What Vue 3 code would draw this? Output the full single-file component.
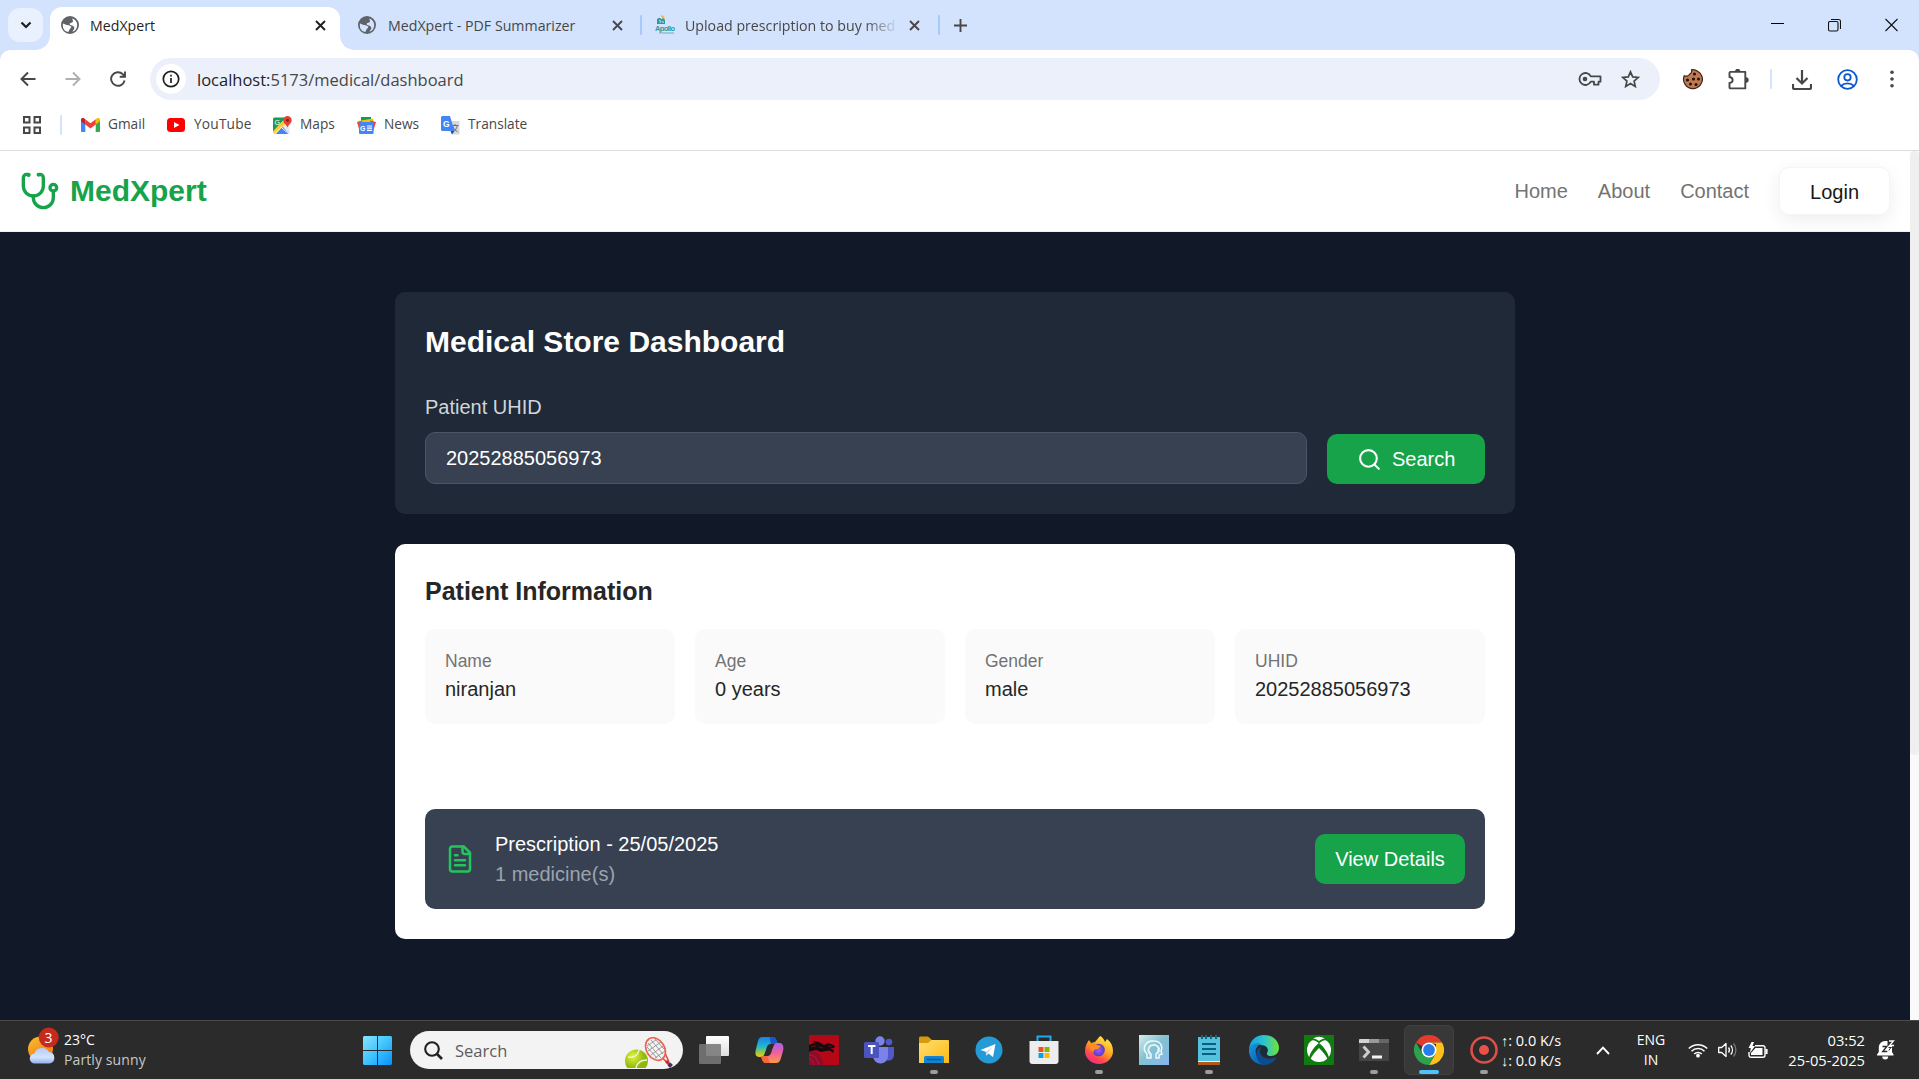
<script setup>
const fields = [
  { label: 'Name', value: 'niranjan' },
  { label: 'Age', value: '0 years' },
  { label: 'Gender', value: 'male' },
  { label: 'UHID', value: '20252885056973' },
]
const globe = 'M9 0a9 9 0 1 0 0 18A9 9 0 0 0 9 0zM1.8 9c0-.6.1-1.100.2-1.600l3.100 1.300c.8.4 1.200.3 1.900.4 1 .2 1.300.8 2.300 1 .9.2 1.200.9.6 1.700l-1.400 1.700-1.200 2.600A7.200 7.200 0 0 1 1.800 9zm9.700 6.700c.3-1.300 1.600-2 1.800-3.400.2-1-.4-1.800-1.300-2.300-1.200-.6-2.900-.4-3.300-1.700-.2-.9.6-1.500 1.600-1.600 1.100-.1 1.900-.8 1.700-1.900-.1-.7-.8-1.100-.7-2.300A7.200 7.200 0 0 1 16.200 9a7.200 7.200 0 0 1-4.700 6.700z'
</script>

<template>
  <div class="screen">
    <div class="tabstrip">
      <button class="tab-search">
        <svg width="12" height="8" viewBox="0 0 12 8"><path d="M1.500 1.500 6 6l4.500-4.500" fill="none" stroke="#1f1f1f" stroke-width="2.200" /></svg>
      </button>
      <div class="tab active">
        <svg class="fav" width="18" height="18"><path :d="globe" fill="#5f6368" /></svg>
        <span class="tab-title">MedXpert</span>
        <svg class="x" width="11" height="11"><path d="M1 1l9 9M10 1l-9 9" stroke="#1f1f1f" stroke-width="1.900" /></svg>
      </div>
      <div class="tab second">
        <svg class="fav" width="18" height="18"><path :d="globe" fill="#5f6368" /></svg>
        <span class="tab-title">MedXpert - PDF Summarizer</span>
        <svg class="x" width="11" height="11"><path d="M1 1l9 9M10 1l-9 9" stroke="#474747" stroke-width="1.900" /></svg>
      </div>
      <i class="tab-sep"></i>
      <div class="tab third">
        <svg class="fav" width="20" height="20" viewBox="0 0 20 20">
          <path d="M5.500 0l3.500 1 1 4-3-2z" fill="#f6b84b" /><path d="M2 4c2-1.500 4-1 4.500.5L8 3l2 2v4H2z" fill="#2e9aa0" /><path d="M4 5.500l2 .8-1 1.500M8 6v2" stroke="#d3e3fd" fill="none" />
          <text x="0" y="15.500" font-size="7.500" font-weight="700" font-family="Liberation Sans, sans-serif" fill="#2e9aa0" textLength="20">Apollo</text>
          <path d="M5 14v5M7 18h12" stroke="#5fb4ad" />
        </svg>
        <span class="tab-title fade">Upload prescription to buy med</span>
        <svg class="x" width="11" height="11"><path d="M1 1l9 9M10 1l-9 9" stroke="#474747" stroke-width="1.900" /></svg>
      </div>
      <i class="tab-sep"></i>
      <svg class="plus" width="13" height="13"><path d="M6.500 0v13M0 6.500h13" stroke="#474747" stroke-width="1.900" /></svg>
      <div class="win">
        <svg width="13" height="14"><path d="M0 5.500h13" stroke="#000" /></svg>
        <svg width="13" height="14"><path d="M.5 5a1.500 1.500 0 0 1 1.500-1.500h6.500A1.500 1.500 0 0 1 10 5v6.500A1.500 1.500 0 0 1 8.500 13H2A1.500 1.500 0 0 1 .5 11.500zM3 1.500h7.500a2 2 0 0 1 2 2V11" fill="none" stroke="#111" stroke-width="1.100" /></svg>
        <svg width="13" height="14"><path d="M.5 1l12 12M12.500 1l-12 12" stroke="#111" stroke-width="1.100" /></svg>
      </div>
    </div>

    <div class="toolbar">
      <svg class="nav-ic" width="16" height="16"><path d="M15.500 8H2M8 1.500 1.500 8 8 14.500" fill="none" stroke="#474747" stroke-width="2" /></svg>
      <svg class="nav-ic" width="16" height="16"><path d="M.5 8H14M8 1.500 14.500 8 8 14.500" fill="none" stroke="#b0b0b0" stroke-width="2" /></svg>
      <svg class="nav-ic" width="16" height="16"><path d="M14.600 9.500A6.800 6.800 0 1 1 12.800 3.200L15 5.300M15 .5v5.300H9.700" fill="none" stroke="#474747" stroke-width="1.900" /></svg>
      <div class="omnibox">
        <span class="info"><svg width="18" height="18"><circle cx="9" cy="9" r="7.700" fill="none" stroke="#1f1f1f" stroke-width="1.700" /><path d="M9 8v5M9 4.800v1.800" stroke="#1f1f1f" stroke-width="1.700" /></svg></span>
        <span class="url"><b>localhost:</b>5173/medical/dashboard</span>
        <svg class="key" width="24" height="14"><path d="M12.800 4.300A6 6 0 1 0 12.800 9.700H16v3h4.500v-3h2V4.300z" fill="none" stroke="#474747" stroke-width="1.800" stroke-linejoin="round" /><circle cx="7" cy="7" r="2.300" fill="#474747" /></svg>
        <svg class="star" width="19" height="18" viewBox="0 0 19 18"><path d="M9.500 1.800l2.200 5.100 5.600.5-4.200 3.700 1.200 5.400-4.800-2.900-4.800 2.900 1.200-5.400L1.700 7.400l5.600-.5z" fill="none" stroke="#474747" stroke-width="1.700" /></svg>
      </div>
      <svg class="cookie" width="21" height="21" viewBox="0 0 21 21"><path d="M9.500.8c.6 1.800-.1 3.700-1.800 4.200-.8 1.700-3.200 2.600-5.500 1.700A9.400 9.400 0 1 0 19.800 7 9.300 9.300 0 0 0 16 2.500 9 9 0 0 0 9.500.8z" fill="#c07a52" stroke="#3e231a" stroke-width="1.200" /><g fill="#21110d"><circle cx="12.500" cy="5" r="1.500" /><circle cx="11.500" cy="10" r="1.600" /><circle cx="5.500" cy="11" r="1.600" /><circle cx="16.500" cy="10" r="1.500" /><circle cx="8.500" cy="15" r="1.500" /><circle cx="14" cy="15.500" r="1.500" /></g></svg>
      <svg class="puzzle" width="21" height="21" viewBox="0 0 21 21"><path d="M3 2.900h14.300v16.500H2.500a1 1 0 0 1-1-1V14c4.200-.5 4.200-5.500 0-6V3.900a1 1 0 0 1 1-1z" fill="none" stroke="#474747" stroke-width="1.900" stroke-linejoin="round" /><path d="M7 2.500a2.700 2.700 0 0 1 5.400 0zM18 8.300a2.700 2.700 0 0 1 0 5.400z" fill="#474747" /></svg>
      <i class="tool-sep"></i>
      <svg class="dl" width="20" height="20"><path d="M10 0v13M4.500 8l5.500 5.500L15.500 8M1 14v3.500A1.500 1.500 0 0 0 2.500 19h15a1.500 1.500 0 0 0 1.500-1.500V14" fill="none" stroke="#474747" stroke-width="2.200" /></svg>
      <svg class="prof" width="21" height="21"><g fill="none" stroke="#0b57d0" stroke-width="1.800"><circle cx="10.500" cy="10.500" r="9.300" /><circle cx="10.500" cy="8.300" r="3.200" /><path d="M4 17c3.500-3.500 9.500-3.500 13 0" /></g></svg>
      <svg class="dots" width="4" height="18"><g fill="#474747"><circle cx="2" cy="2.200" r="1.800" /><circle cx="2" cy="9" r="1.800" /><circle cx="2" cy="15.800" r="1.800" /></g></svg>
    </div>

    <div class="bookmarks">
      <svg class="apps" width="18" height="18"><path d="M1 1h5.500v5.500H1zM11.500 1H17v5.500h-5.500zM1 11.500h5.500V17H1zM11.500 11.500H17V17h-5.500z" fill="none" stroke="#474747" stroke-width="2" /></svg>
      <i class="bm-sep"></i>
      <div class="bm gmail"><svg width="19" height="14" viewBox="0 0 19 14"><path d="M0 2v11a1 1 0 0 0 1 1h3.300V5z" fill="#4285f4" /><path d="M19 2v11a1 1 0 0 1-1 1h-3.300V5z" fill="#34a853" /><path d="M14.700 1.200V6.500L19 3.300V1.700C19 0 17-.6 15.700.4z" fill="#fbbc04" /><path d="M4.300 6.500V1.200l5.200 4 5.200-4v5.300l-5.200 4z" fill="#ea4335" /><path d="M0 1.700v1.600l4.300 3.200V1.200L3.300.4C2-.6 0 0 0 1.700z" fill="#c5221f" /></svg><span>Gmail</span></div>
      <div class="bm yt"><svg width="18" height="14"><rect width="18" height="14" rx="3.500" fill="#f00" /><path d="M7 4l5.500 3L7 10z" fill="#fff" /></svg><span>YouTube</span></div>
      <div class="bm maps"><svg width="19" height="19" viewBox="0 0 19 19"><rect y="1.500" width="16.500" height="16.500" rx="1.500" fill="#e8eaed" /><path d="M0 15.500V3a1.500 1.500 0 0 1 1.500-1.500H13z" fill="#1a9c57" /><path d="M1.500 18L9 10l7.500 8z" fill="#4285f4" /><path d="M0 15.800L11 4l2.500 2.500L3 18H1z" fill="#fbc92f" /><path d="M8 11l8 7M1.500 18L9 10.500" stroke="#fff" stroke-width="1" /><path d="M14.500 11.500C13 8 10.300 7.500 10.300 4.300a4.200 4.200 0 0 1 8.400 0C18.700 7.500 16 8 14.500 11.500z" fill="#e34133" /><circle cx="14.500" cy="4.300" r="1.500" fill="#8e1f17" /><text x="1.500" y="8.500" font-size="7" fill="#fff" font-family="Liberation Sans, sans-serif">G</text></svg><span>Maps</span></div>
      <div class="bm news"><svg width="19" height="17" viewBox="0 0 19 17"><path d="M4 0h10v6H4z" fill="#0c9d58" /><path d="M1 4l15-2.500 1 4H2z" fill="#fbbc04" /><path d="M13 3.500l6 1.500-3 10z" fill="#ea4335" /><path d="M0 5l5-1v8H2z" fill="#ea4335" /><rect x="2" y="5" width="14.500" height="12" rx="1" fill="#4285f4" /><text x="3" y="13.500" font-size="7" font-weight="700" fill="#fff" font-family="Liberation Sans, sans-serif">G</text><path d="M10 9h5M10 11.200h5M10 13.400h5" stroke="#fff" stroke-width="1.200" /></svg><span>News</span></div>
      <div class="bm trans"><svg width="19" height="19" viewBox="0 0 19 19"><path d="M6 5h12.500v13.500H11z" fill="#d5d8dc" /><path d="M10.500 9.500h7M14 8v1.500M16.500 9.500c-1 3.500-2.500 5-4.500 6M12 10.500c1 3 2.500 4 4.500 5" stroke="#6b7076" fill="none" /><path d="M1.500 0H9l4.500 15H1.500A1.500 1.500 0 0 1 0 13.500v-12A1.500 1.500 0 0 1 1.500 0z" fill="#4285f4" /><path d="M9.500 15h4L11 18.500z" fill="#1a4ea6" /><text x="2" y="10.500" font-size="8.500" fill="#fff" font-weight="700" font-family="Liberation Sans, sans-serif">G</text></svg><span>Translate</span></div>
    </div>

    <div class="viewport">
      <div class="page">
        <header>
          <div class="brand">
            <svg width="40" height="40" viewBox="0 0 24 24" fill="none" stroke="#16a34a" stroke-width="2" stroke-linecap="round" stroke-linejoin="round"><path d="M4.800 2.300A.3.300 0 1 0 5 2H4a2 2 0 0 0-2 2v5a6 6 0 0 0 12 0V4a2 2 0 0 0-2-2h-1a.2.200 0 1 0 .3.300" /><path d="M8 15v1a6 6 0 0 0 12 0v-4" /><circle cx="20" cy="10" r="2" /></svg>
            <span>MedXpert</span>
          </div>
          <nav><a>Home</a><a>About</a><a>Contact</a><button class="login">Login</button></nav>
        </header>
        <main>
          <section class="dash">
            <h1>Medical Store Dashboard</h1>
            <div class="search-row">
              <div class="field"><label>Patient UHID</label><div class="input">20252885056973</div></div>
              <button class="green search-btn"><svg width="25" height="25" viewBox="0 0 24 24" fill="none" stroke="#fff" stroke-width="2" stroke-linecap="round"><circle cx="11" cy="11" r="8" /><path d="m21 21-4.300-4.300" /></svg>Search</button>
            </div>
          </section>
          <section class="patient">
            <h2>Patient Information</h2>
            <div class="grid">
              <div v-for="f in fields" :key="f.label" class="info-card"><p class="k">{{ f.label }}</p><p class="v">{{ f.value }}</p></div>
            </div>
            <div class="rx">
              <svg width="30" height="30" viewBox="0 0 24 24" fill="none" stroke="#22c55e" stroke-width="2" stroke-linecap="round" stroke-linejoin="round"><path d="M15 2H6a2 2 0 0 0-2 2v16a2 2 0 0 0 2 2h12a2 2 0 0 0 2-2V7Z" /><path d="M14 2v4a2 2 0 0 0 2 2h4M10 9H8M16 13H8M16 17H8" /></svg>
              <div class="rx-text"><p>Prescription - 25/05/2025</p><p class="muted">1 medicine(s)</p></div>
              <button class="green view">View Details</button>
            </div>
          </section>
        </main>
      </div>
      <div class="scroll"><i></i></div>
    </div>

    <div class="taskbar">
      <div class="weather">
        <svg width="32" height="38" viewBox="0 0 32 38">
          <defs><linearGradient id="sun" x2=".6" y2="1"><stop stop-color="#f9c02c" /><stop offset="1" stop-color="#f07a1b" /></linearGradient><linearGradient id="cloud" x2="0" y2="1"><stop stop-color="#b3cdf8" /><stop offset=".6" stop-color="#d4e3fc" /><stop offset="1" stop-color="#8fb1ee" /></linearGradient></defs>
          <circle cx="12.500" cy="22" r="12.500" fill="url(#sun)" /><path d="M7 36.500a5 5 0 0 1-.5-10 8 8 0 0 1 14.500-1.500 5.800 5.800 0 0 1 .5 11.500z" fill="url(#cloud)" />
          <circle cx="20.700" cy="10.500" r="10" fill="#c42b1c" /><text x="20.500" y="15.500" text-anchor="middle" font-size="14" fill="#fff" font-family="Open Sans, sans-serif">3</text>
        </svg>
        <div class="w-text"><p>23°C</p><p class="dim">Partly sunny</p></div>
      </div>
      <svg class="start" width="29" height="29"><defs><linearGradient id="win" x2="1" y2="1"><stop stop-color="#8be2ff" /><stop offset=".5" stop-color="#40c4fd" /><stop offset="1" stop-color="#0890ff" /></linearGradient></defs><path d="M1 0h13v14H0V1zM15 0h13l1 1v13H15zM0 15h14v14H1l-1-1zM15 15h14v13l-1 1H15z" fill="url(#win)" /></svg>
      <div class="tb-search">
        <svg width="19" height="19"><circle cx="8" cy="8" r="6.800" fill="none" stroke="#222" stroke-width="2.100" /><path d="M13 13l5 5" stroke="#222" stroke-width="2.700" /></svg>
        <span>Search</span>
        <svg class="tennis" width="48" height="32" viewBox="0 0 48 32">
          <defs><radialGradient id="ball" cx=".35" cy=".3"><stop stop-color="#e4f43a" /><stop offset="1" stop-color="#8fb80b" /></radialGradient><clipPath id="pill"><path d="M0 0h48v31H0z" /></clipPath></defs>
          <g clip-path="url(#pill)"><circle cx="11.500" cy="24" r="11.500" fill="url(#ball)" /><path d="M3 20c6 1 10-2 11-7M11 35c-1-8 4-12 11-12" stroke="#eef4e0" stroke-width="1.500" fill="none" /></g>
          <path d="M35 19l8 7M40 16l4 9" stroke="#e0443a" stroke-width="1.500" /><path d="M41 24l5 5" stroke="#c32e31" stroke-width="3" /><path d="M44 27l2.500 2.500" stroke="#43306b" stroke-width="4" />
          <ellipse cx="30.500" cy="12" rx="9" ry="12" transform="rotate(-32 30.500 12)" fill="#f4f4f4" stroke="#ee6351" stroke-width="1.700" />
          <path d="M23 6l13 15M26 3l12 14M22 10l10 11M30 2l9 10M22 9l9-6M23 14l13-9M26 18l12-9M30 21l10-7" stroke="#858585" stroke-width=".8" />
        </svg>
      </div>
      <div class="apps-row">
        <div class="slot"><svg width="30" height="28"><defs><linearGradient id="tv" x2="0" y2="1"><stop stop-color="#fff" /><stop offset="1" stop-color="#ddd" /></linearGradient></defs><rect x="7" y="0" width="23" height="20" rx="1" fill="url(#tv)" /><rect x="0" y="8" width="22" height="20" rx="1" fill="#777" opacity=".88" /></svg></div>
        <div class="slot"><svg width="30" height="28" viewBox="0 0 30 28"><defs><linearGradient id="cpa" x2="0" y2="1"><stop stop-color="#1781e8" /><stop offset=".5" stop-color="#27b9c8" /><stop offset=".8" stop-color="#a7cc31" /><stop offset="1" stop-color="#f5c51d" /></linearGradient><linearGradient id="cpb" x2="0" y2="1"><stop stop-color="#a660ee" /><stop offset=".5" stop-color="#f0609c" /><stop offset="1" stop-color="#ff9946" /></linearGradient></defs><path d="M8 1h11c3 0 3 3 5 7h-7c-3 0-4 2-5 6l-2 5c-1 2-2 2-4 2H5c-4 0-4-4-3-8L4 5c1-3 2-4 4-4z" fill="url(#cpa)" /><path d="M16 1h3c3 0 3 3 5 7h-7c-1-3-1-5-1-7z" fill="#1856c9" /><path d="M22 27H12c-3 0-4-3-5-7h6c3 0 4-2 5-6l2-5c1-2 2-2 4-2h2c3 0 4 4 3 8l-2 7c-1 3-2 5-5 5z" fill="url(#cpb)" /><path d="M7 20h6c2 2 1 6 4 7h-5c-3 0-4-3-5-7z" fill="#f2693b" /></svg></div>
        <div class="slot"><svg width="30" height="30"><rect width="30" height="30" fill="#b50716" /><path d="M0 16c9 0 12 4 15 14H0z" fill="#8e0c2b" /><path d="M0 10l6-2.500L3 6l7 1 5 3 4-2 4 1.500 3 1.500-1 2-4 .5 4 1.500-1 3-3-2.500-4 .5-5 1-5-2-7 1.500z" fill="#160b0f" /><path d="M2 12l5-1M10 12l4 1M19 11l4 .5" stroke="#6c0a14" fill="none" /><path d="M0 20c6 0 8 4 10 10M0 24c3 0 4 3 5 6" stroke="#bd153b" fill="none" /></svg></div>
        <div class="slot"><svg width="30" height="28" viewBox="0 0 30 28"><circle cx="16" cy="5" r="4.700" fill="#7b83eb" /><circle cx="25" cy="6" r="3.300" fill="#5059c9" /><path d="M19 11h11v8a6 6 0 0 1-9 5z" fill="#5059c9" /><path d="M9 11h15v9a7.300 7.300 0 0 1-15 0z" fill="#7b83eb" /><rect y="6" width="15" height="16" rx="1.500" fill="#4b53bc" /><path d="M4 10h7.500M7.700 10v8" stroke="#fff" stroke-width="2" /></svg></div>
        <div class="slot run"><svg width="30" height="28"><defs><linearGradient id="fo" x2="1" y2="1"><stop stop-color="#ffdf72" /><stop offset="1" stop-color="#fcb910" /></linearGradient></defs><path d="M0 2a1.500 1.500 0 0 1 1.500-1.500H9L13 4v5H0z" fill="#d89a0b" /><path d="M0 7h9l3.500-3H29a1 1 0 0 1 1 1v22H0z" fill="url(#fo)" /><path d="M5 27v-5.500A1.500 1.500 0 0 1 6.500 20h17a1.500 1.500 0 0 1 1.500 1.500V27z" fill="#1384d5" /><path d="M8 23.500h14" stroke="#08599b" stroke-width="1.500" /></svg></div>
        <div class="slot"><svg width="28" height="28"><circle cx="14" cy="14" r="13.500" fill="#249bd7" /><path d="M5.500 14L20.500 8 18 21l-4.500-3.500-2.300 2.200-.4-3.900z" fill="#fff" /><path d="M11 16l7-5.500-5.500 6.500-1.300 2.500z" fill="#b9d9ec" /></svg></div>
        <div class="slot"><svg width="30" height="30"><path d="M8.500 7V1.500h13V7" fill="none" stroke="#22a8ec" stroke-width="2" /><path d="M.5 6h29v20a3 3 0 0 1-3 3h-23a3 3 0 0 1-3-3z" fill="#ededed" /><path d="M9.500 12h5v5h-5z" fill="#f25022" /><path d="M15.500 12h5v5h-5z" fill="#7fba00" /><path d="M9.500 18h5v5h-5z" fill="#00a4ef" /><path d="M15.500 18h5v5h-5z" fill="#ffb900" /></svg></div>
        <div class="slot run"><svg width="30" height="30" viewBox="0 0 30 30"><defs><linearGradient id="ff" x1=".8" x2=".2" y2="1"><stop stop-color="#fff04d" /><stop offset=".45" stop-color="#ffa41f" /><stop offset=".75" stop-color="#ff4551" /><stop offset="1" stop-color="#f4239b" /></linearGradient><radialGradient id="fp"><stop stop-color="#9e5cff" /><stop offset="1" stop-color="#5a3bc2" /></radialGradient></defs><path d="M16 1c3 1 4 4 5 6l2-3c4 3 6 7 6 12a14 13 0 0 1-28 0c0-5 2-8 4-11l2 3 4-1z" fill="url(#ff)" /><circle cx="14.500" cy="15" r="6.300" fill="url(#fp)" /><path d="M4 9c4-2 8-1 9 1l4 1-3 3c-3 0-5 1-4 4-3-2-4-5-6-9z" fill="#ff8d20" /></svg></div>
        <div class="slot"><svg width="30" height="30"><defs><linearGradient id="ai" x2="1" y2="1"><stop stop-color="#d6edf0" /><stop offset=".45" stop-color="#83c2cf" /><stop offset="1" stop-color="#86b6ef" /></linearGradient></defs><rect width="30" height="30" fill="url(#ai)" /><path d="M8 23v-4c-6-6-1-14 7-13 7 0 9 6 7 10l1 3-3 1v3h-3v-4c4-3 3-9-2-9-6 0-7 6-3 9v4z" fill="none" stroke="#eef9fc" stroke-width="1.500" /><path d="M11 23v-3c-4-4-2-10 4-10s7 5 4 9" fill="none" stroke="#e3f3f8" stroke-width="1" /></svg></div>
        <div class="slot run"><svg width="22" height="30"><rect y="2" width="22" height="26" fill="#54c1df" /><path d="M0 27h22v3H0z" fill="#b1581b" /><path d="M0 26.500h22" stroke="#eee" /><path d="M4 9h14M4 14h14M4 19h14" stroke="#075f82" stroke-width="1.800" /><path d="M4 0v4M8 0v4M13 0v4M18 0v4" stroke="#0e6686" stroke-width="2" /></svg></div>
        <div class="slot"><svg width="30" height="30" viewBox="0 0 30 30"><defs><linearGradient id="eg" x2="1"><stop stop-color="#189de2" /><stop offset=".5" stop-color="#2cc4cf" /><stop offset="1" stop-color="#70e338" /></linearGradient><linearGradient id="eb" x2="1" y2="1"><stop stop-color="#1697df" /><stop offset="1" stop-color="#0650a6" /></linearGradient></defs><path d="M0 14C1 5 7 0 15 0c9 0 15 6 15 13 0 5-4 8-8 8-3 0-5-1-4-3 2-3 0-8-6-8C7 8 3 10 0 14z" fill="url(#eg)" /><path d="M0 14c2-5 7-7 12-5-5 2-7 7-4 12 3 6 8 7 12 8C9 32-1 25 0 14z" fill="url(#eb)" /><path d="M12 12c-4 8 4 15 16 10-3 6-10 9-15 7-7-4-8-14-1-17z" fill="#0b4c91" /><path d="M13 12c3-2 7 1 5 5-1 2 0 4 3 4-6 2-12-3-8-9z" fill="#172d3a" /></svg></div>
        <div class="slot"><svg width="30" height="30"><rect width="30" height="30" rx="1" fill="#107c10" /><circle cx="15" cy="15" r="12" fill="#fff" /><path d="M7 5.500c3-1 6 1 8 3 2-2 5-4 8-3-3-4-13-4-16 0z" fill="#107c10" /><path d="M15 8c4 3 9 9 10 15l-1 2c-2-5-6-9-9-12-3 3-7 7-9 12l-1-2c1-6 6-12 10-15z" fill="#107c10" /><path d="M9 3.500c2 0 4 1 6 2.500 2-1.500 4-2.500 6-2.500A12 12 0 0 0 9 3.500z" fill="#fff" /></svg></div>
        <div class="slot run"><svg width="30" height="22"><rect width="30" height="22" rx="1" fill="#454545" /><path d="M0 1a1 1 0 0 1 1-1h9v4H0z" fill="#d4d4d4" /><path d="M10 0h10v4H10z" fill="#999" /><path d="M20 0h10v4H20z" fill="#666" /><path d="M4.500 7.500L9.500 13l-5 5.500" fill="none" stroke="#ccc" stroke-width="3" /><path d="M13 18h10" stroke="#f3f3f3" stroke-width="3" /></svg></div>
        <div class="slot current"><span class="hl"></span><svg width="30" height="30" viewBox="0 0 30 30"><path d="M15 15L2 7.500A15 15 0 0 1 28 7.500H15z" fill="#e33b2e" /><path d="M28 7.500A15 15 0 0 1 15 30l6.500-11.300L22 9 15 7.500z" fill="#fcc21b" /><path d="M2 7.500A15 15 0 0 0 15 30l6.500-11.300-6.500 3-6.500-3z" fill="#2ba24c" /><circle cx="15" cy="15" r="7.500" fill="#fff" /><circle cx="15" cy="15" r="5.900" fill="#2a7de9" /></svg></div>
        <div class="slot run"><svg width="28" height="28"><circle cx="14" cy="14" r="12.500" fill="none" stroke="#dc5048" stroke-width="2.600" /><circle cx="14" cy="14" r="5" fill="#ea5149" /></svg></div>
      </div>
      <div class="net"><p>↑: 0.0 K/s</p><p>↓: 0.0 K/s</p></div>
      <svg class="chev" width="14" height="9"><path d="M1 8l6-6.300L13 8" fill="none" stroke="#fff" stroke-width="1.900" /></svg>
      <div class="lang"><p>ENG</p><p>IN</p></div>
      <svg class="wifi" width="20" height="16"><g fill="none" stroke="#fff" stroke-width="1.500"><path d="M.8 6.500a13 13 0 0 1 18.400 0" /><path d="M3.500 9.300a9.200 9.200 0 0 1 13 0" /><path d="M6.200 12a5.400 5.400 0 0 1 7.600 0" /></g><circle cx="10" cy="13.700" r="1.900" fill="#fff" /></svg>
      <svg class="spk" width="20" height="16"><path d="M.7 5.500h3L8 1.500v13l-4.300-4h-3z" fill="none" stroke="#fff" stroke-width="1.300" stroke-linejoin="round" /><path d="M10.500 5.500a4 4 0 0 1 0 5M12.800 3.500a7 7 0 0 1 0 9" fill="none" stroke="#fff" stroke-width="1.300" /><path d="M15.500 1.500a10 10 0 0 1 0 13" fill="none" stroke="#777" stroke-width="1.300" /></svg>
      <svg class="bat" width="20" height="17"><path d="M7 3.700h8a2 2 0 0 1 2 2v7.600a2 2 0 0 1-2 2H3a2 2 0 0 1-2-2V10" fill="none" stroke="#fff" stroke-width="1.400" /><path d="M18.600 7v5" stroke="#fff" stroke-width="2" /><path d="M7.500 6h7v7H3v-2z" fill="#fff" /><path d="M3.500 0L.5 6h2.300L2 11l5-7H4.500L6 0z" fill="#fff" /></svg>
      <div class="clock"><p>03:52</p><p>25-05-2025</p></div>
      <svg class="bell" width="18" height="20"><path d="M1.800 7A6.200 6.200 0 0 1 8 1h2.500v5H15v6l1.500 2.500v1H0v-1L1.800 12zM5.200 16.500h6a3 3 0 0 1-6 0z" fill="#fff" /><path d="M12 1h4.500l-4 4.500H17" fill="none" stroke="#fff" stroke-width="1.300" /><path d="M5.500 6.500h4.300l-4 5h4.500" fill="none" stroke="#2b2b2b" stroke-width="1.400" /><path d="M11.500 7.500h3M14.300 7l-2.500 3.500" fill="none" stroke="#2b2b2b" /></svg>
    </div>
  </div>
</template>

<style>
body { margin: 0; overflow: hidden; }
</style>
<style scoped>
* { box-sizing: border-box; }
p, h1, h2 { margin: 0; }
svg { display: block; flex: none; }
button { border: 0; padding: 0; font: inherit; }
.screen { width: 1919px; height: 1079px; display: flex; flex-direction: column; font-family: "Open Sans", sans-serif; background: #fff; overflow: hidden; }

.tabstrip { height: 50px; flex: none; background: #d3e3fd; display: flex; align-items: center; padding-left: 8px; font-size: 14.200px; color: #474747; }
.tab-search { width: 35px; height: 34px; border-radius: 12px; background: #e9f1fe; display: flex; align-items: center; justify-content: center; }
.tab { display: flex; align-items: center; height: 43px; margin-top: 7px; padding-bottom: 7px; white-space: nowrap; flex: none; }
.tab-title { margin-left: 12px; flex: 1; line-height: 20px; padding-top: 1px; }
.active { position: relative; width: 290px; margin-left: 7px; padding-left: 11px; padding-right: 14px; background: #fff; border-radius: 12px 12px 0 0; color: #1f1f1f; }
.active .tab-title { margin-left: 11px; }
.active::before, .active::after { content: ""; position: absolute; bottom: 0; width: 14px; height: 14px; }
.active::before { left: -14px; background: radial-gradient(circle at 0 0, transparent 13.500px, #fff 14px); }
.active::after { right: -14px; background: radial-gradient(circle at 14px 0, transparent 13.500px, #fff 14px); }
.second { width: 283px; padding-left: 18px; margin-right: 17px; }
.third { width: 278px; padding-left: 13px; margin-right: 18px; }
.third .tab-title { margin-left: 10px; flex: none; width: 210px; margin-right: 14px; }
.fade { -webkit-mask-image: linear-gradient(90deg, #000 180px, transparent 214px); mask-image: linear-gradient(90deg, #000 180px, transparent 214px); }
.tab-sep, .tool-sep, .bm-sep { width: 2px; height: 20px; border-radius: 1px; background: #a8c7fa; flex: none; }
.plus { margin-left: 14px; }
.win { margin-left: auto; display: flex; gap: 44px; padding-right: 21px; }

.toolbar { height: 58px; flex: none; display: flex; align-items: center; padding: 0 25px 0 20px; background: #fff; position: relative; }
.toolbar::before, .toolbar::after { content: ""; position: absolute; top: 0; width: 10px; height: 10px; }
.toolbar::before { left: 0; background: radial-gradient(circle at 10px 10px, transparent 9.500px, #d3e3fd 10px); }
.toolbar::after { right: 0; background: radial-gradient(circle at 0 10px, transparent 9.500px, #d3e3fd 10px); }
.nav-ic { margin-right: 29px; }
.omnibox { width: 1510px; height: 42px; margin-left: -5px; border-radius: 21px; background: #ebf0fa; display: flex; align-items: center; }
.info { width: 30px; height: 30px; border-radius: 50%; background: #fff; margin-left: 6px; display: flex; align-items: center; justify-content: center; }
.url { margin-left: 11px; font-size: 16.500px; color: #474747; }
.url b { font-weight: 400; color: #1f1f1f; }
.key { margin-left: auto; }
.star { margin: 0 20px 0 19px; }
.cookie { margin-left: 22px; }
.puzzle { margin-left: 25px; }
.tool-sep { background: #d3e3fd; margin-left: 21px; }
.dl { margin-left: 20px; margin-top: 1px; }
.prof { margin-left: 25px; }
.dots { margin-left: auto; }

.bookmarks { height: 43px; flex: none; display: flex; align-items: center; padding: 0 0 8px 23px; border-bottom: 1px solid #dcdcdc; font-size: 13.700px; color: #474747; }
.bm-sep { background: #d3e3fd; margin: 0 19px 0 19px; }
.bm { display: flex; align-items: center; gap: 8px; white-space: nowrap; flex: none; }
.bm span { line-height: 20px; padding-bottom: 2px; }
.gmail { width: 86px; }
.yt { width: 106px; }
.yt span { letter-spacing: .2px; padding-left: 1px; }
.maps { width: 84px; }
.news { width: 84px; }

.viewport { height: 869px; flex: none; display: flex; font-family: "Liberation Sans", Arial, sans-serif; font-size: 20px; line-height: 30px; }
.page { width: 1910px; background: #111827; }
.scroll { width: 9px; background: #fafafa; }
.scroll i { display: block; height: 604px; background: #efefef; border-radius: 5px; }
header { height: 81px; background: #fff; border-bottom: 1px solid #f0f0f0; display: flex; align-items: center; justify-content: space-between; padding: 0 20px; }
.brand { display: flex; align-items: center; gap: 10px; color: #16a34a; font-weight: 700; font-size: 30px; }
nav { display: flex; align-items: center; gap: 30px; color: #737373; }
.login { height: 48px; padding: 1px 30px 0; border: 1px solid #f5f5f5; border-radius: 10px; background: #fff; color: #171717; box-shadow: 0 5px 18px rgba(0, 0, 0, .07); }
main { width: 1120px; margin: 60px auto 0; display: flex; flex-direction: column; gap: 30px; }
section { padding: 30px; border-radius: 10px; }
.dash { background: #1f2937; color: #fff; }
h1 { font-size: 30px; line-height: 40px; margin-bottom: 30px; }
.search-row { display: flex; gap: 20px; align-items: flex-end; }
.field { flex: 1; }
label { display: block; color: #d1d5db; margin-bottom: 10px; }
.input { height: 52px; border: 1px solid #4b5563; border-radius: 10px; background: #374151; padding: 10px 20px; }
.green { height: 50px; border-radius: 10px; background: #16a34a; color: #fff; }
.search-btn { width: 158px; padding: 0 30px; display: flex; align-items: center; gap: 10px; }
.patient { background: #fff; height: 395px; }
h2 { font-size: 25px; line-height: 35px; color: #262626; margin-bottom: 20px; }
.grid { display: grid; grid-template-columns: repeat(4, 1fr); gap: 20px; margin-bottom: 85px; }
.info-card { height: 95px; padding: 20px; border-radius: 10px; background: #fafafa; color: #262626; }
.k { font-size: 17.500px; line-height: 25px; color: #737373; }
.rx { height: 100px; border-radius: 10px; background: #374151; color: #fff; display: flex; align-items: center; padding: 0 20px; gap: 20px; }
.muted { color: #9ca3af; }
.view { margin-left: auto; width: 150px; }

.taskbar { height: 59px; flex: none; background: #2b2b2b; border-top: 1px solid #4a4a4a; display: flex; align-items: center; color: #fff; font-size: 14px; line-height: 20px; padding-left: 28px; white-space: nowrap; }
.weather { display: flex; width: 335px; gap: 4px; margin-top: -4px; }
.w-text { margin-top: 3px; }
.dim { color: #c8c8c8; letter-spacing: .1px; }
.tb-search { width: 273px; height: 38px; margin-left: 18px; border-radius: 19px; background: #f3f3f3; display: flex; align-items: center; padding: 0 10px 0 14px; color: #5c5c5c; font-size: 16.500px; }
.tb-search span { margin-left: 12px; padding-top: 1px; }
.tennis { margin-left: auto; margin-top: 5px; }
.apps-row { display: flex; margin-left: 3px; }
.slot { width: 55px; height: 50px; display: flex; align-items: center; justify-content: center; position: relative; }
.run::after, .current::after { content: ""; position: absolute; bottom: 1px; width: 8px; height: 4px; border-radius: 2px; background: #9d9d9d; }
.current::after { width: 20px; background: #4cc2ff; }
.hl { position: absolute; inset: 0 2.500px; border: 1px solid #414141; border-radius: 6px; background: #383838; }
.current svg { position: relative; }
.net { margin-left: -10px; width: 95px; font-size: 14.500px; padding-top: 1px; }
.lang { width: 40px; text-align: center; margin: 0 17px 0 21px; }
.spk { margin-left: 10px; }
.bat { margin-left: 10px; }
.clock { width: 97px; text-align: right; font-size: 14.700px; }
.bell { margin-left: 12px; }
</style>
